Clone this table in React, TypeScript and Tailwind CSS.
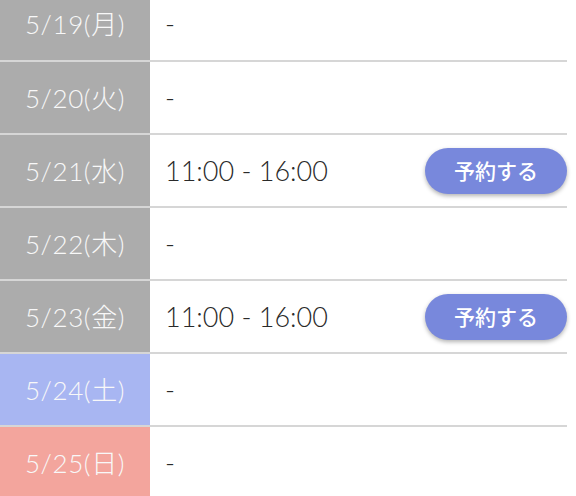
import React from 'react';

type Day = { date: string; hours?: string; kind: 'weekday' | 'sat' | 'sun' };

const days: Day[] = [
  { date: '5/19(月)', kind: 'weekday' },
  { date: '5/20(火)', kind: 'weekday' },
  { date: '5/21(水)', hours: '11:00 - 16:00', kind: 'weekday' },
  { date: '5/22(木)', kind: 'weekday' },
  { date: '5/23(金)', hours: '11:00 - 16:00', kind: 'weekday' },
  { date: '5/24(土)', kind: 'sat' },
  { date: '5/25(日)', kind: 'sun' },
];

const dateBg = {
  weekday: 'bg-[#acacac]',
  sat: 'bg-[#a8b6f2]',
  sun: 'bg-[#f3a59d]',
};

const App: React.FC = () => (
  <div
    className="w-[576px] h-[496px] overflow-hidden bg-white"
    style={{ fontFamily: 'Lato, "Noto Sans CJK JP", sans-serif' }}
  >
    <div className="-mt-[13px] w-[567px]">
      {days.map((d, i) => (
        <div key={d.date} className={`flex h-[73px] ${i > 0 ? 'border-t-2 border-[#d6d6d6]' : ''}`}>
          <div className={`w-[150px] shrink-0 flex items-center justify-center pt-[2px] text-[26px] tracking-[0.6px] font-light text-[#f8f8f8] ${dateBg[d.kind]}`}>
            {d.date}
          </div>
          <div className="flex-1 flex items-center justify-between pl-[15px]">
            <span className="pt-[2px] text-[27px] font-light text-[#2a2a2a]">
              {d.hours ?? '-'}
            </span>
            {d.hours && (
              <button
                className="w-[142px] h-[46px] rounded-full bg-[#7888dc] text-white text-[21px] font-medium shadow-[0_2px_4px_rgba(0,0,0,0.3)]"
                style={{ fontFamily: '"Noto Sans CJK JP", sans-serif' }}
              >
                予約する
              </button>
            )}
          </div>
        </div>
      ))}
    </div>
  </div>
);

export default App;
